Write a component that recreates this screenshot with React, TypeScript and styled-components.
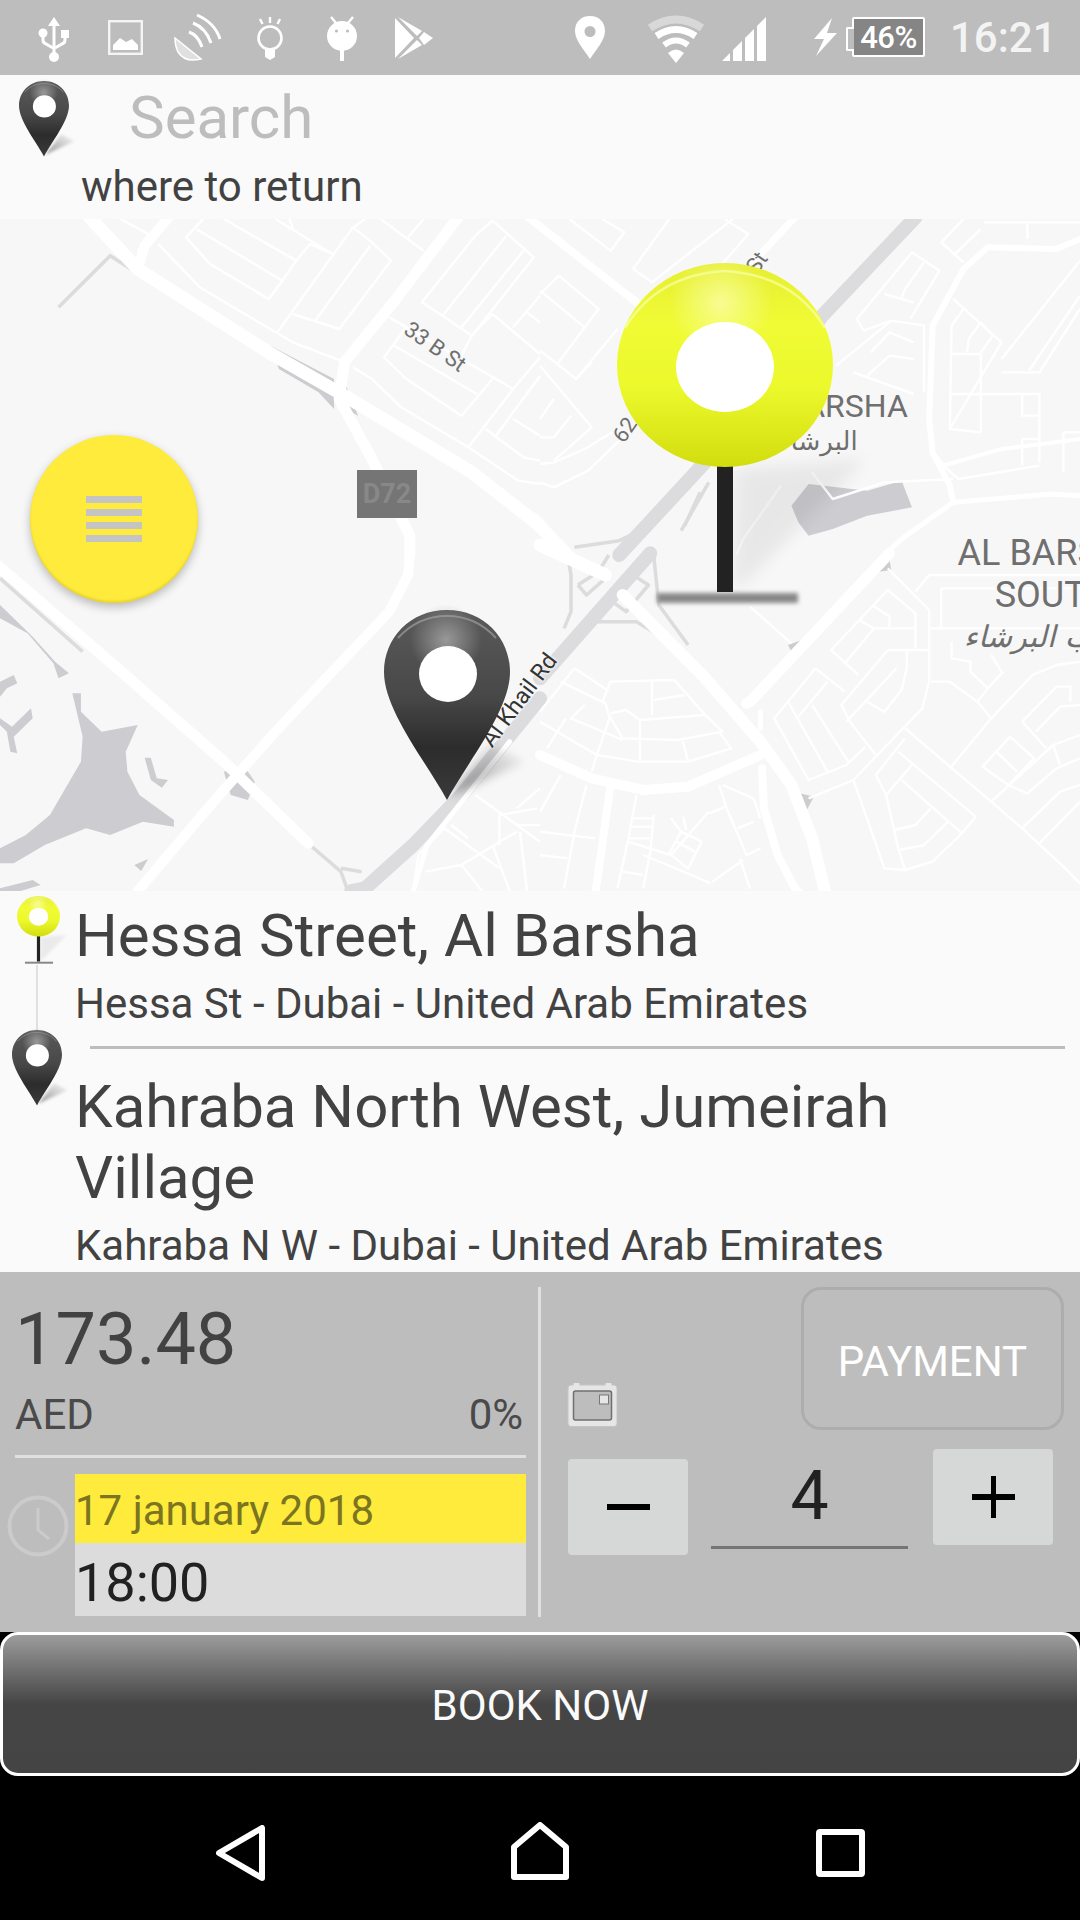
import styled, { createGlobalStyle } from "styled-components";

const GlobalStyle = createGlobalStyle`
    html, body {
        margin: 0;
        padding: 0;
        background: #000;
    }
    * {
        box-sizing: border-box;
    }
`;

const Screen = styled.div`
    width: 1080px;
    height: 1920px;
    display: flex;
    flex-direction: column;
    overflow: hidden;
    font-family: Roboto, "Liberation Sans", sans-serif;
    color: #424242;
`;

/* status bar */
const StatusBar = styled.div`
    height: 75px;
    flex: none;
    background: #bdbdbd;
    display: flex;
    align-items: flex-start;
    padding-left: 18px;
    color: #fff;
`;

const Slot = styled.div<{ $w: number; $top: number; $left?: number }>`
    width: ${(p) => p.$w}px;
    margin-left: ${(p) => p.$left ?? 0}px;
    padding-top: ${(p) => p.$top}px;
    flex: none;
    display: flex;
    justify-content: center;
    svg {
        display: block;
        overflow: visible;
    }
`;

const Battery = styled.div`
    margin: 17px 0 0 15px;
    width: 73px;
    height: 40px;
    flex: none;
    position: relative;
    border: 2px solid #fff;
    border-radius: 2px;
    background: #858585;
    display: flex;
    align-items: center;
    justify-content: center;
    font-size: 31px;
    font-weight: 500;
    letter-spacing: -0.5px;
    &::before {
        content: "";
        position: absolute;
        left: -8px;
        top: 8px;
        width: 6px;
        height: 20px;
        background: #bdbdbd;
        border: 2px solid #fff;
        border-right: none;
        border-radius: 2px 0 0 2px;
    }
`;

const Clock = styled.div`
    margin: 14px 0 0 25px;
    font-size: 42px;
    line-height: 48px;
    font-weight: 500;
    color: #f3f3f3;
`;

/* search header */
const SearchHeader = styled.div`
    height: 144px;
    flex: none;
    background: #fafafa;
    position: relative;
    padding-top: 9px;
`;

const PinSpot = styled.div<{ $x: number; $y: number }>`
    position: absolute;
    left: ${(p) => p.$x}px;
    top: ${(p) => p.$y}px;
    svg {
        display: block;
        overflow: visible;
    }
`;

const SearchText = styled.div`
    margin-left: 129px;
    font-size: 60px;
    line-height: 68px;
    color: #bdbdbd;
`;

const ReturnText = styled.div`
    margin: 9px 0 0 81px;
    font-size: 42px;
    line-height: 52px;
`;

/* map */
const MapArea = styled.div`
    height: 672px;
    flex: none;
    position: relative;
    overflow: hidden;
    background: #f7f7f7;
`;

const MapBase = styled.svg`
    display: block;
    width: 100%;
    height: 100%;
    polyline {
        vector-effect: non-scaling-stroke;
        fill: none;
        stroke: #fff;
        stroke-linejoin: round;
        stroke-width: 2.4px;
    }
    polyline.road {
        stroke-linecap: round;
    }
    polygon {
        fill: #cdccd0;
    }
`;

const MapLabel = styled.div<{ $x: number; $y: number; $size: number; $rot?: number; $dark?: boolean }>`
    position: absolute;
    left: ${(p) => p.$x}px;
    top: ${(p) => p.$y}px;
    font-size: ${(p) => p.$size}px;
    line-height: 1;
    white-space: nowrap;
    color: ${(p) => (p.$dark ? "#333" : "#6f6f6f")};
    text-shadow: 0 0 3px #f7f7f7, 0 0 3px #f7f7f7, 0 0 3px #f7f7f7;
    transform: translate(-50%, -50%) rotate(${(p) => p.$rot ?? 0}deg);
`;

const ArabicLabel = styled(MapLabel)<{ $slant?: boolean }>`
    font-family: "DejaVu Sans", sans-serif;
    font-style: ${(p) => (p.$slant ? "italic" : "normal")};
    direction: rtl;
`;

const RoadShield = styled.div`
    position: absolute;
    left: 357px;
    top: 251px;
    width: 60px;
    height: 48px;
    background: #757575;
    color: #888;
    font-size: 27px;
    font-weight: 700;
    display: flex;
    align-items: center;
    justify-content: center;
`;

const MenuFab = styled.div`
    position: absolute;
    left: 30px;
    top: 216px;
    width: 168px;
    height: 168px;
    border-radius: 50%;
    background: #ffeb3b;
    box-shadow: 0 4px 10px rgba(0, 0, 0, 0.25), inset 0 -2px 2px rgba(190, 160, 0, 0.3);
    display: flex;
    flex-direction: column;
    align-items: center;
    justify-content: center;
    gap: 6px;
`;

const MenuLine = styled.span`
    width: 56px;
    height: 7px;
    background: #c4c4c4;
`;

/* route details */
const Details = styled.div`
    height: 381px;
    flex: none;
    background: #fafafa;
    position: relative;
    padding: 9px 15px 0 75px;
    overflow: hidden;
`;

const Connector = styled.div`
    position: absolute;
    left: 36px;
    top: 74px;
    width: 2px;
    height: 66px;
    background: #e0e0e0;
`;

const PlaceName = styled.div`
    font-size: 60px;
    line-height: 71px;
`;

const PlaceAddress = styled.div`
    font-size: 42px;
    line-height: 50px;
    margin-top: 8px;
`;

const PlaceRule = styled.div`
    height: 3px;
    background: #bdbdbd;
    margin: 17px 0 22px 15px;
`;

/* fare panel */
const Panel = styled.div`
    height: 360px;
    flex: none;
    background: #bdbdbd;
    display: flex;
    padding: 15px 16px 15px 15px;
`;

const FareColumn = styled.div`
    width: 511px;
    flex: none;
    display: flex;
    flex-direction: column;
`;

const Price = styled.div`
    font-size: 72px;
    line-height: 84px;
    margin-top: 11px;
`;

const CurrencyRow = styled.div`
    display: flex;
    justify-content: space-between;
    font-size: 42px;
    line-height: 48px;
    margin-top: 9px;
    padding-right: 3px;
    color: #4a4a4a;
`;

const FareRule = styled.div`
    height: 3px;
    background: #e0e0e0;
    margin-top: 16px;
`;

const WhenRow = styled.div`
    display: flex;
    margin-top: 16px;
`;

const ClockSlot = styled.div`
    width: 60px;
    flex: none;
    margin-left: -8px;
    padding-top: 21px;
    svg {
        display: block;
    }
`;

const WhenBoxes = styled.div`
    flex: 1;
    margin-left: 8px;
`;

const DateBox = styled.div`
    height: 69px;
    background: #ffeb3b;
    color: #7b7420;
    font-size: 42px;
    line-height: 73px;
    white-space: nowrap;
`;

const TimeBox = styled.div`
    height: 73px;
    background: #dcdcdc;
    color: #212121;
    font-size: 54px;
    line-height: 79px;
`;

const VerticalRule = styled.div`
    width: 3px;
    flex: none;
    margin-left: 12px;
    background: #e0e0e0;
`;

const OrderColumn = styled.div`
    flex: 1;
    padding-left: 27px;
    display: flex;
    flex-direction: column;
`;

const PaymentRow = styled.div`
    display: flex;
    justify-content: space-between;
    align-items: flex-end;
    svg {
        display: block;
        margin: 0 0 3px -1px;
    }
`;

const PaymentButton = styled.div`
    width: 263px;
    height: 143px;
    border: 3px solid #adadad;
    border-radius: 20px;
    color: #fff;
    font-size: 42px;
    display: flex;
    align-items: center;
    justify-content: center;
    padding-top: 5px;
`;

const Stepper = styled.div`
    display: flex;
    align-items: flex-start;
    margin-top: 19px;
`;

const StepButton = styled.div<{ $offset: number }>`
    width: 120px;
    height: 96px;
    flex: none;
    margin-top: ${(p) => p.$offset}px;
    background: #d6d7d7;
    border-radius: 4px;
    display: flex;
    align-items: center;
    justify-content: center;
    svg {
        display: block;
    }
`;

const Quantity = styled.div`
    width: 197px;
    height: 92px;
    flex: none;
    margin: 8px 25px 0 23px;
    border-bottom: 3px solid #757575;
    color: #212121;
    font-size: 68px;
    line-height: 78px;
    text-align: center;
`;

/* book + nav */
const BookButton = styled.div`
    height: 144px;
    flex: none;
    border: 3px solid #fff;
    border-radius: 18px;
    background: linear-gradient(#9c9c9c 0%, #454545 50%, #444 100%);
    color: #fafafa;
    font-size: 42px;
    display: flex;
    align-items: center;
    justify-content: center;
    padding-top: 2px;
`;

const NavBar = styled.div`
    flex: 1;
    background: #000;
    position: relative;
    svg {
        position: absolute;
    }
`;

// map data is traced per quadrant: each quadrant is 1568 x 1008 map units
const QUADRANTS = [
    {
        x: 0,
        y: 0,
        land: [
            "785,380 970,480 970,570 925,520 810,450",
            "1005,500 1040,590 1000,570",
        ],
        ramps: ["170,265 320,110 380,150"],
        streets: [
            "350,0 430,45 400,100",
            "460,75 580,205 850,370 990,425",
            "590,0 540,55 610,135 780,240 820,185 570,30",
            "650,0 860,125 900,75 965,105 800,0",
            "860,125 820,185 780,240",
            "840,0 850,25 835,30",
            "1025,25 805,340",
            "1025,25 1080,70 1135,125 985,330 850,285",
            "1075,80 915,305",
            "1060,0 1020,30",
            "1105,0 1230,95",
            "1230,0 1185,55",
            "1430,5 1380,50 1225,250 1285,290 1370,350 1550,115 1430,5",
            "1470,50 1285,290",
            "1520,95 1340,325",
            "1130,295 1490,510 1568,415",
            "1430,285 1568,405",
            "1430,285 1370,350 1340,410",
            "1568,230 1490,325",
            "1530,280 1568,310",
            "1145,380 1385,525",
            "1180,325 1115,415 1180,480 1340,590 1430,480",
            "1025,445 1080,480 1165,565 1360,685 1505,785 1568,795",
            "1360,685 1490,510",
            "1410,630 1520,715 1568,725",
            "1440,650 1568,470",
            "1490,600 1568,650",
        ],
        roads: [
            { w: 13, d: "260,-5 400,150 780,400 1000,530 1370,760 1568,920" },
            { w: 10, d: "490,-5 420,80 400,150" },
            { w: 11, d: "1330,-5 1150,240 1000,430 985,540 1080,720 1190,950 1190,1008" },
        ],
    },
    {
        x: 1568,
        y: 0,
        land: ["730,860 780,795 950,815 1050,785 1080,865 950,890 850,930 780,950 750,910"],
        ramps: ["490,790 410,935", "465,820 420,920", "100,985 230,965 300,930"],
        streets: [
            "55,170 170,270 50,435",
            "0,225 55,170",
            "130,325 0,215",
            "0,395 50,435 105,480 225,330",
            "105,480 150,430",
            "0,440 150,625 40,725",
            "40,540 0,600",
            "90,590 40,655 0,655",
            "0,735 40,730 130,690 210,640",
            "0,790 40,805 140,755 270,625",
            "85,0 205,95 245,40 180,0",
            "270,150 375,0",
            "270,150 325,190 560,0",
            "535,0 605,45 390,300",
            "1165,70 1230,130",
            "1165,70 1230,0",
            "1200,110 1280,30",
            "1290,10 1568,10",
            "1415,10 1415,60",
            "1080,100 920,300 940,335 1020,305 1115,320 1115,520",
            "1080,100 1160,155 1075,300",
            "1115,130 1060,210 1050,235",
            "1000,225 1085,250",
            "860,440 1020,305",
            "1085,370 1015,340 960,400",
            "1085,420 1015,410 950,470",
            "910,460 1085,525",
            "1200,240 1340,370 1190,630",
            "1195,320 1190,630 1280,640",
            "1190,405 1280,405 1280,640",
            "1190,525 1450,525 1450,730",
            "1240,400 1245,360 1280,310",
            "1195,320 1230,270",
            "1280,310 1315,350 1280,400",
            "1340,420 1568,125",
            "1340,460 1450,460 1568,270",
            "1420,455 1568,230",
            "1400,525 1400,590 1450,590",
            "1400,660 1400,740",
            "1400,660 1450,660",
            "1520,640 1568,640",
            "1520,640 1520,760",
            "1170,740 1215,780 1450,740",
            "1200,780 1000,790 850,840 790,760",
            "700,800 590,960 570,1008",
        ],
        roads: [
            { w: 13, d: "-20,900 90,1020" },
            { w: 14, d: "1090,-5 820,290 560,640 300,930 230,1008", grey: true },
            { w: 8, d: "-40,-10 280,250" },
            { w: 7, d: "740,-5 600,150" },
            { w: 6, d: "1568,60 1500,90 1300,85 1230,150 1140,320 1130,600 1140,700 1190,800 1200,850" },
            { w: 5, d: "1568,830 1490,825 1200,850 1050,960 1000,1008" },
            { w: 4, d: "1140,700 1170,740 1340,690 1568,660" },
        ],
    },
    {
        x: 0,
        y: 1008,
        land: [
            "0,150 90,240 160,320 200,355 170,370 155,325 80,235 0,190",
            "210,415 235,415 235,470 295,530 400,510 365,590 370,650 405,720 505,795 505,815 415,800 320,840 250,820 130,870 40,925 0,925 0,880 75,840 145,780 235,620 240,545",
            "0,380 40,360 50,385 20,400 0,425",
            "90,460 95,490 40,545 50,595 30,590 20,530 0,510 0,490 35,515",
            "420,608 438,608 455,670 488,675 470,698 438,675",
            "390,930 430,912 410,948",
            "0,1000 95,975 118,990 60,1008 0,1008",
            "650,650 710,635 740,680 720,735 670,720",
        ],
        ramps: ["0,70 240,290", "900,870 990,950 1010,1008", "990,940 1050,950"],
        streets: [
            "1380,720 1568,860",
            "1200,1008 1215,900 1290,820 1450,940",
            "1310,810 1360,850",
            "1430,870 1480,1008",
            "1500,810 1568,810",
            "1560,760 1450,780 1450,870",
            "1235,950 1340,930 1400,1008",
            "1340,930 1500,830",
            "1510,830 1530,1008",
            "1500,760 1568,700",
        ],
        roads: [
            { w: 14, d: "1568,430 1340,720 1200,870 1060,1000 1020,1008", grey: true },
            { w: 11, d: "-20,20 330,330 650,620 895,865" },
            { w: 10, d: "1190,0 1185,60 1130,170 800,530 620,740 400,1008" },
            { w: 5, d: "1480,560 1240,870 1200,1008" },
        ],
    },
    {
        x: 1568,
        y: 1008,
        land: [
            "720,270 760,255 735,300",
            "755,715 795,725 775,765",
            "985,50 1015,15 1020,45",
        ],
        ramps: [
            "80,0 90,60 90,170 70,220",
            "110,90 170,50 200,0",
            "110,90 135,120 190,70",
            "270,60 315,90 250,170 210,140",
            "160,200 280,200 360,250",
            "330,0 345,150 430,270",
        ],
        streets: [
            "100,340 195,405 180,445",
            "100,340 0,470",
            "60,380 190,445 200,480 240,550 400,555 530,530 480,480 390,375 205,380 195,405",
            "325,375 325,480",
            "330,435 420,420",
            "205,475 250,465 290,495 480,480",
            "290,495 290,620",
            "130,450 90,490 240,555",
            "0,500 165,600 285,620 430,620 555,580 520,530",
            "75,490 20,580",
            "205,480 165,600 150,650",
            "415,560 430,620",
            "60,660 0,770",
            "135,690 100,830",
            "0,830 160,850",
            "280,720 255,860 380,900 490,770",
            "330,780 320,900",
            "270,790 330,790",
            "262,815 325,815",
            "255,850 320,850",
            "380,790 410,830 470,860",
            "415,785 425,825",
            "410,830 375,895 430,940 470,860",
            "395,860 450,890",
            "520,690 540,755 600,900 640,880",
            "530,690 620,730",
            "575,820 620,800",
            "590,915 500,980",
            "580,910 610,1000",
            "300,900 440,960 495,985",
            "240,950 300,960",
            "255,860 225,1000",
            "320,890 300,1000",
            "100,830 70,1000",
            "0,900 80,910",
            "540,755 490,775",
            "620,730 640,790",
            "1010,105 1090,175 1090,280",
            "1010,105 845,285 925,360",
            "965,150 1015,185 1015,215",
            "925,195 970,220 885,325",
            "970,220 1090,220",
            "1010,285 1130,285",
            "1010,285 875,450 900,500 975,600",
            "1065,285 1065,340 1050,405 1000,470 950,440",
            "1035,340 890,500",
            "1130,165 1130,380 1110,460 910,675 780,730",
            "800,340 680,490 780,675 890,630 945,575",
            "800,340 885,410",
            "835,380 750,485",
            "790,450 895,620",
            "720,440 835,650",
            "1010,40 1130,165",
            "1090,110 1130,60 1568,60",
            "1165,100 1568,100",
            "1165,100 1165,220",
            "1135,220 1568,220",
            "1195,260 1195,310 1250,320 1250,350 1300,400 1270,440 1190,380 1135,380",
            "1300,400 1345,350",
            "1310,300 1340,350",
            "1060,520 1310,740 1400,820 1530,945 1568,985",
            "1270,440 1310,490 1190,640",
            "1310,490 1430,360 1500,330 1568,320",
            "1040,590 1265,785",
            "1060,550 975,660 1005,720 1040,880 1060,945 1000,940 910,675",
            "1080,630 1005,720",
            "1050,675 1225,835 1140,920 1060,945",
            "1135,760 1090,810 1030,825",
            "1185,800 1115,870 1045,885",
            "1265,785 1225,835",
            "1400,500 1500,395 1540,395 1540,440",
            "1400,500 1470,580",
            "1510,455 1568,450",
            "1510,455 1440,530",
            "1365,545 1435,610 1360,690 1285,635 1365,545",
            "1325,590 1385,650",
            "1360,690 1415,715 1500,640 1568,610",
            "1490,570 1510,630",
            "1490,570 1568,540",
            "1310,740 1490,570",
            "1400,820 1510,710 1568,690",
            "1450,865 1568,740",
            "610,155 730,265",
        ],
        roads: [
            { w: 13, d: "0,-30 190,60" },
            { w: 14, d: "320,-5 0,370", grey: true },
            { w: 12, d: "240,120 480,370 640,560 730,690 790,850 830,1020" },
            { w: 11, d: "1015,-5 610,440 600,445" },
            { w: 10, d: "0,600 150,670 300,705 430,695 640,600" },
            { w: 8, d: "205,690 160,1020" },
            { w: 8, d: "645,640 650,760 690,900 740,1000 760,1020" },
            { w: 5, d: "640,470 640,520" },
        ],
    },
];

function MapStreets() {
    return (
        <MapBase viewBox="0 0 3136 2016" preserveAspectRatio="none">
            {QUADRANTS.map((q) => (
                <g key={`${q.x}-${q.y}`} transform={`translate(${q.x} ${q.y})`}>
                    {q.land.map((p) => (
                        <polygon key={p} points={p} />
                    ))}
                    {q.ramps.map((p) => (
                        <polyline key={p} points={p} style={{ stroke: "#dcdbdd", strokeWidth: 3.5 }} />
                    ))}
                    {q.streets.map((p) => (
                        <polyline key={p} points={p} />
                    ))}
                    {q.roads.map((r) => (
                        <polyline
                            key={r.d}
                            className="road"
                            points={r.d}
                            style={{ stroke: r.grey ? "#dcdbdd" : "#fff", strokeWidth: r.w }}
                        />
                    ))}
                </g>
            ))}
        </MapBase>
    );
}

function DarkPin({ width, gid }: { width: number; gid: string }) {
    return (
        <svg width={width} height={(width * 190) / 126} viewBox="0 0 126 190">
            <defs>
                <linearGradient id={gid} x1="0" y1="0" x2="0" y2="1">
                    <stop offset="0" stopColor="#5a5a5a" />
                    <stop offset="0.45" stopColor="#484848" />
                    <stop offset="0.72" stopColor="#2c2c2c" />
                    <stop offset="1" stopColor="#3a3a3a" />
                </linearGradient>
                <radialGradient id={`${gid}h`} cx="62" cy="30" r="36" gradientUnits="userSpaceOnUse">
                    <stop offset="0" stopColor="#aaa" stopOpacity="0.8" />
                    <stop offset="1" stopColor="#aaa" stopOpacity="0" />
                </radialGradient>
                <linearGradient id={`${gid}s`} x1="0" y1="1" x2="1" y2="0">
                    <stop offset="0" stopColor="#000" stopOpacity="0.4" />
                    <stop offset="1" stopColor="#000" stopOpacity="0" />
                </linearGradient>
                <filter id={`${gid}b`} x="-30%" y="-30%" width="160%" height="160%">
                    <feGaussianBlur stdDeviation="4" />
                </filter>
            </defs>
            <path d="M66 186L140 152L106 134Z" fill={`url(#${gid}s)`} filter={`url(#${gid}b)`} />
            <path
                d="M63 0C100 0 126 28 126 62C126 100 85 150 63 190C41 150 0 100 0 62C0 28 26 0 63 0Z"
                fill={`url(#${gid})`}
            />
            <circle cx="62" cy="30" r="36" fill={`url(#${gid}h)`} />
            <path d="M14 28Q34 6 63 6Q92 6 112 28" fill="none" stroke="#a8a8a8" strokeWidth="2" opacity="0.6" />
            <ellipse cx="64" cy="64" rx="29" ry="28" fill="#fff" />
        </svg>
    );
}

function YellowPin({ width, gid }: { width: number; gid: string }) {
    return (
        <svg width={width} height={(width * 342) / 216} viewBox="0 0 216 342">
            <defs>
                <linearGradient id={gid} x1="0" y1="0" x2="0" y2="1">
                    <stop offset="0" stopColor="#e6ee30" />
                    <stop offset="0.3" stopColor="#f0fb35" />
                    <stop offset="0.6" stopColor="#ecf92c" />
                    <stop offset="1" stopColor="#d2dd0e" />
                </linearGradient>
                <radialGradient id={`${gid}h`} cx="104" cy="40" r="52" gradientUnits="userSpaceOnUse">
                    <stop offset="0" stopColor="#fbffb0" stopOpacity="0.75" />
                    <stop offset="1" stopColor="#fbffb0" stopOpacity="0" />
                </radialGradient>
                <filter id={`${gid}b`} x="-30%" y="-30%" width="160%" height="160%">
                    <feGaussianBlur stdDeviation="8" />
                </filter>
                <filter id={`${gid}e`} x="-10%" y="-100%" width="120%" height="300%">
                    <feGaussianBlur stdDeviation="2" />
                </filter>
            </defs>
            <path d="M116 323L119 206L250 196L171 276L125 323Z" fill="#000" opacity="0.06" filter={`url(#${gid}b)`} />
            <rect x="40" y="330" width="141" height="10" fill="#888" filter={`url(#${gid}e)`} />
            <rect x="100" y="200" width="16" height="129" fill="#222" />
            <ellipse cx="108" cy="102" rx="108" ry="102" fill={`url(#${gid})`} />
            <ellipse cx="108" cy="102" rx="108" ry="102" fill={`url(#${gid}h)`} />
            <path d="M8 65Q40 12 108 8Q176 12 208 65" fill="none" stroke="#f8ffa8" strokeWidth="2.5" opacity="0.7" />
            <ellipse cx="108" cy="104" rx="49" ry="45" fill="#fff" />
        </svg>
    );
}

function App() {
    return (
        <Screen>
            <GlobalStyle />
            <StatusBar>
                <Slot $w={72} $top={17}>
                    <svg width="32" height="45" viewBox="0 0 32 45" fill="#fff">
                        <path d="M16 0L10 9H22Z" />
                        <rect x="14.5" y="8" width="3" height="32" />
                        <circle cx="16" cy="40" r="5" />
                        <circle cx="5" cy="16" r="4.5" />
                        <rect x="23" y="13" width="8" height="8" />
                        <path d="M5 19V23Q5 26 8 27L15 31M27 20V23Q27 26 24 27L17 31" fill="none" stroke="#fff" strokeWidth="3" />
                    </svg>
                </Slot>
                <Slot $w={71} $top={20}>
                    <svg width="35" height="35" viewBox="0 0 35 35">
                        <rect x="1.2" y="1.2" width="32.6" height="32.6" fill="none" stroke="#f5f5f5" strokeWidth="2.4" />
                        <path d="M5 30V25L12 18L18 22L24 19L30 25V30Z" fill="#fff" />
                    </svg>
                </Slot>
                <Slot $w={73} $top={14}>
                    <svg width="50" height="47" viewBox="0 0 50 47" fill="none">
                        <path d="M2 24L28 45Q12 49 5 38Q2 32 2 24Z" fill="#e0e0e0" stroke="#fff" strokeWidth="1.5" />
                        <path d="M24 1Q42 9 47 25M20 9Q33 14 38 29M16 18Q25 21 29 33" stroke="#fff" strokeWidth="3" />
                    </svg>
                </Slot>
                <Slot $w={72} $top={16}>
                    <svg width="26" height="44" viewBox="0 0 26 44" fill="none" stroke="#fff">
                        <circle cx="13" cy="22" r="11.5" strokeWidth="2.6" />
                        <path d="M13 1V7M3 3L5.5 8M23 3L20.5 8" strokeWidth="2.4" />
                        <path d="M8 33H18V41L13 44L8 41Z" fill="#fff" stroke="none" />
                    </svg>
                </Slot>
                <Slot $w={72} $top={16}>
                    <svg width="30" height="45" viewBox="0 0 30 45" fill="#fff">
                        <circle cx="15" cy="20" r="15" />
                        <path d="M4 1L9 7M26 1L21 7" stroke="#fff" strokeWidth="2.4" />
                        <rect x="13" y="34" width="4" height="11" />
                        <circle cx="9.5" cy="15" r="1.6" fill="#bdbdbd" />
                        <circle cx="20.5" cy="15" r="1.6" fill="#bdbdbd" />
                    </svg>
                </Slot>
                <Slot $w={72} $top={17}>
                    <svg width="39" height="42" viewBox="0 0 39 42" fill="#fff">
                        <path d="M0 1V41L19 21Z" />
                        <path d="M3 0L27 14L22 19Z" />
                        <path d="M29 15L38 21L29 28L24 21Z" />
                        <path d="M3 42L22 23L27 28Z" />
                    </svg>
                </Slot>
                <Slot $w={30} $top={16} $left={125}>
                    <svg width="30" height="43" viewBox="0 0 30 43">
                        <path fillRule="evenodd" fill="#fff" d="M15 0C24 0 30 6 30 15C30 24 21 34 15 43C9 34 0 24 0 15C0 6 6 0 15 0ZM15 10A5.5 5.5 0 1 0 15 21A5.5 5.5 0 1 0 15 10Z" />
                    </svg>
                </Slot>
                <Slot $w={58} $top={16} $left={42}>
                    <svg width="58" height="48" viewBox="0 0 58 48" fill="none">
                        <path d="M3 12Q29 -5 55 12" stroke="#d8d8d8" strokeWidth="8" />
                        <path d="M9.5 20Q29 7 48.5 20" stroke="#fff" strokeWidth="7" />
                        <path d="M17 29Q29 20 41 29" stroke="#fff" strokeWidth="6" />
                        <path d="M21 37Q29 30 37 37L29 47Z" fill="#fff" />
                    </svg>
                </Slot>
                <Slot $w={44} $top={17} $left={17}>
                    <svg width="44" height="44" viewBox="0 0 44 44" fill="#fff">
                        <path d="M0 44L8 36V44Z" />
                        <path d="M11 33L20 24V44H11Z" />
                        <path d="M23 21L32 12V44H23Z" />
                        <path d="M35 9L44 0V44H35Z" />
                    </svg>
                </Slot>
                <Slot $w={24} $top={18} $left={47}>
                    <svg width="23" height="38" viewBox="0 0 23 38" fill="#fff">
                        <path d="M18 0L0 21H10L2 38L23 15H13Z" />
                    </svg>
                </Slot>
                <Battery>46%</Battery>
                <Clock>16:21</Clock>
            </StatusBar>

            <SearchHeader>
                <PinSpot $x={19} $y={6}>
                    <DarkPin width={50} gid="pinHeader" />
                </PinSpot>
                <SearchText>Search</SearchText>
                <ReturnText>where to return</ReturnText>
            </SearchHeader>

            <MapArea>
                <MapStreets />
                <MapLabel $x={435} $y={128} $size={22} $rot={35}>33 B St</MapLabel>
                <MapLabel $x={625} $y={211} $size={22} $rot={-55}>62</MapLabel>
                <MapLabel $x={757} $y={44} $size={22} $rot={-55}>St</MapLabel>
                <MapLabel $x={823} $y={187} $size={32}>AL BARSHA</MapLabel>
                <ArabicLabel $x={818} $y={222} $size={26}>البرشاء</ArabicLabel>
                <MapLabel $x={1053} $y={334} $size={36}>AL BARSHA</MapLabel>
                <MapLabel $x={1053} $y={376} $size={36}>SOUTH</MapLabel>
                <ArabicLabel $x={1050} $y={418} $size={30} $slant>جنوب البرشاء</ArabicLabel>
                <MapLabel $x={519} $y={481} $size={23} $rot={-53} $dark>Al Khail Rd</MapLabel>
                <RoadShield>D72</RoadShield>

                <PinSpot $x={617} $y={44}>
                    <YellowPin width={216} gid="pinYellow" />
                </PinSpot>
                <PinSpot $x={384} $y={391}>
                    <DarkPin width={126} gid="pinMap" />
                </PinSpot>
                <MenuFab>
                    <MenuLine />
                    <MenuLine />
                    <MenuLine />
                    <MenuLine />
                </MenuFab>
            </MapArea>

            <Details>
                <Connector />
                <PinSpot $x={17} $y={5}>
                    <YellowPin width={43} gid="pinYellowSmall" />
                </PinSpot>
                <PinSpot $x={12} $y={139}>
                    <DarkPin width={50} gid="pinDetails" />
                </PinSpot>
                <PlaceName>Hessa Street, Al Barsha</PlaceName>
                <PlaceAddress>Hessa St - Dubai - United Arab Emirates</PlaceAddress>
                <PlaceRule />
                <PlaceName>Kahraba North West, Jumeirah Village</PlaceName>
                <PlaceAddress>Kahraba N W - Dubai - United Arab Emirates</PlaceAddress>
            </Details>

            <Panel>
                <FareColumn>
                    <Price>173.48</Price>
                    <CurrencyRow>
                        <span>AED</span>
                        <span>0%</span>
                    </CurrencyRow>
                    <FareRule />
                    <WhenRow>
                        <ClockSlot>
                            <svg width="62" height="62" viewBox="0 0 62 62" fill="none" stroke="#cbcbcb" strokeWidth="4">
                                <circle cx="31" cy="31" r="28.5" />
                                <path d="M31 13V35L42 44" strokeWidth="3" />
                            </svg>
                        </ClockSlot>
                        <WhenBoxes>
                            <DateBox>17 january 2018</DateBox>
                            <TimeBox>18:00</TimeBox>
                        </WhenBoxes>
                    </WhenRow>
                </FareColumn>
                <VerticalRule />
                <OrderColumn>
                    <PaymentRow>
                        <svg width="51" height="44" viewBox="0 0 50 44">
                            <rect x="0.5" y="2" width="49" height="41.5" rx="3" fill="#e6e6e6" stroke="#c4c4c4" />
                            <rect x="6" y="0" width="6" height="4" rx="1" fill="#e6e6e6" />
                            <rect x="38" y="0" width="6" height="4" rx="1" fill="#e6e6e6" />
                            <rect x="6" y="8" width="38" height="29" rx="2" fill="#bdbdbd" stroke="#707070" strokeWidth="1.5" />
                            <rect x="32" y="12" width="9" height="9" fill="#e6e6e6" stroke="#777" />
                        </svg>
                        <PaymentButton>PAYMENT</PaymentButton>
                    </PaymentRow>
                    <Stepper>
                        <StepButton $offset={10}>
                            <svg width="43" height="6" viewBox="0 0 43 6">
                                <rect width="43" height="6" fill="#000" />
                            </svg>
                        </StepButton>
                        <Quantity>4</Quantity>
                        <StepButton $offset={0}>
                            <svg width="43" height="42" viewBox="0 0 43 42" fill="#000">
                                <rect y="18" width="43" height="6" />
                                <rect x="19" width="5" height="42" />
                            </svg>
                        </StepButton>
                    </Stepper>
                </OrderColumn>
            </Panel>

            <BookButton>BOOK NOW</BookButton>

            <NavBar>
                <svg style={{ left: 216, top: 49 }} width="49" height="56" viewBox="0 0 49 56" fill="none" stroke="#fff" strokeWidth="6" strokeLinejoin="round">
                    <path d="M46 3V53L3 28Z" />
                </svg>
                <svg style={{ left: 511, top: 46 }} width="58" height="58" viewBox="0 0 58 58" fill="none" stroke="#fff" strokeWidth="6" strokeLinejoin="round">
                    <path d="M3 55V25L29 3L55 25V55Z" />
                </svg>
                <svg style={{ left: 816, top: 53 }} width="49" height="48" viewBox="0 0 49 48" fill="none" stroke="#fff" strokeWidth="6" strokeLinejoin="round">
                    <rect x="3" y="3" width="43" height="42" rx="1" />
                </svg>
            </NavBar>
        </Screen>
    );
}

export default App;
